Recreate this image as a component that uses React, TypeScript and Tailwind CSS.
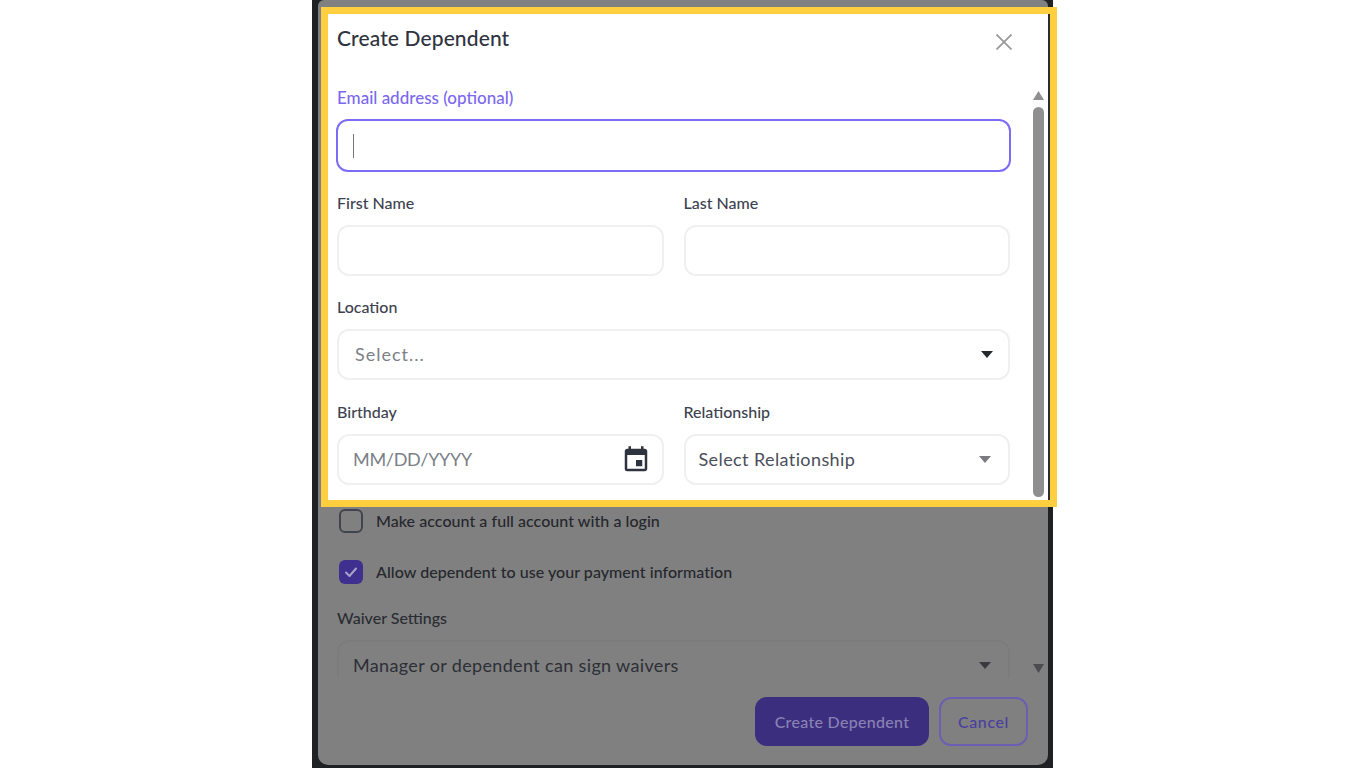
import React from 'react';
import { MdEvent } from 'react-icons/md';

const Caret: React.FC<{ className: string; up?: boolean }> = ({ className, up }) => (
    <svg viewBox="0 0 12 7" className={className} fill="currentColor" preserveAspectRatio="none">
        {up ? <path d="M6 0 12 7H0Z" /> : <path d="M0 0H12L6 7Z" />}
    </svg>
);

const Field: React.FC<{ label: string; children?: React.ReactNode; className?: string }> = ({ label, children, className }) => (
    <div className={className}>
        <div className="h-6 leading-6 text-[16px] font-medium text-[#3d4250]">{label}</div>
        <div className="mt-2.5 h-[51px] flex items-center rounded-xl border-2 border-[#f0f0f0] bg-white px-[14px]">
            {children}
        </div>
    </div>
);

const App: React.FC = () => {
    return (
        <div className="h-[768px] w-[1366px] overflow-hidden bg-white flex justify-center font-['Lato',sans-serif]">
            <div className="relative h-[768px] w-[741px] ml-[-1px] bg-[#202125] pl-[6px] pr-[5px] pb-[3px]">
                {/* dimmed modal underneath */}
                <div className="h-full rounded-b-[10px] rounded-t-md bg-[#808080] flex flex-col">
                    <div className="h-[678px] shrink-0 overflow-hidden pt-[509px] pl-[19px] pr-[38px] relative">
                        <div className="flex items-center h-6 pl-[2px]">
                            <div className="w-6 h-6 rounded-md border-2 border-[#3f4450]" />
                            <span className="ml-[13px] text-[16px] font-medium tracking-[0.05px] text-[#25272d]">Make account a full account with a login</span>
                        </div>
                        <div className="flex items-center h-6 pl-[2px] mt-[27px]">
                            <div className="w-6 h-6 rounded-md bg-[#3f2f8f] flex items-center justify-center">
                                <svg viewBox="0 0 16 16" className="w-4 h-4" fill="none" stroke="#a7a3c8" strokeWidth="2" strokeLinecap="round" strokeLinejoin="round">
                                    <path d="M3 8.5 6.5 12 13 4.5" />
                                </svg>
                            </div>
                            <span className="ml-[13px] text-[16px] font-medium tracking-[0.05px] text-[#25272d]">Allow dependent to use your payment information</span>
                        </div>
                        <div className="mt-[22px] h-6 leading-6 text-[16px] font-medium text-[#2a2c33]">Waiver Settings</div>
                        <div className="mt-[10px] h-[51px] flex items-center justify-between rounded-xl border-2 border-[#7a7d7b] px-[14px]">
                            <span className="text-[18px] tracking-[0.35px] text-[#2d2f36]">Manager or dependent can sign waivers</span>
                            <Caret className="w-3 h-[7px] mr-[3px] text-[#3a3a3e]" />
                        </div>
                        <Caret className="absolute right-[4px] top-[664px] w-[11px] h-[9px] text-[#4c4c4e]" />
                    </div>
                    <div className="flex justify-end gap-[10px] pt-[19px] pr-[20px]">
                        <button className="w-[174px] h-[49px] rounded-xl bg-[#3b2e7e] text-[16px] font-medium tracking-[0.3px] text-[#8a82b4]">Create Dependent</button>
                        <button className="w-[89px] h-[49px] rounded-xl border-2 border-[#6a5fb0] text-[16px] font-medium tracking-[0.6px] text-[#4b3f9e]">Cancel</button>
                    </div>
                </div>

                {/* highlighted part of the form */}
                <div className="absolute left-[9px] top-[7px] w-[736px] h-[500px] border-[7px] border-[#ffcf40] bg-white flex">
                    <div className="w-[703px] shrink-0 pl-[9px] pt-[11px]">
                        <div className="flex items-center justify-between h-7">
                            <h2 className="text-[21px] font-medium mt-[-2px] tracking-[0.12px] text-[#2f3340]">Create Dependent</h2>
                            <svg viewBox="0 0 16 16" className="w-4 h-4 mt-[5px] mr-[19px]" fill="none" stroke="#999999" strokeWidth="1.8">
                                <path d="M0.5 0.5 15.5 15.5M15.5 0.5 0.5 15.5" />
                            </svg>
                        </div>
                        <div className="mt-[33px] h-6 leading-6 text-[17px] font-medium text-[#7b68ee]">Email address (optional)</div>
                        <div className="mt-[9px] ml-[-1px] h-[53px] w-[675px] flex items-center rounded-xl border-2 border-[#7c6cf5] px-[15px]">
                            <div className="h-6 w-px bg-[#777777]" />
                        </div>
                        <div className="mt-[19px] grid grid-cols-2 gap-x-5 w-[673px]">
                            <Field label="First Name" />
                            <Field label="Last Name" />
                        </div>
                        <Field label="Location" className="mt-[19px] w-[673px]">
                            <div className="flex-1 flex items-center justify-between">
                                <span className="text-[18px] tracking-[1px] text-[#7b7f88] pl-[2px]">Select...</span>
                                <Caret className="w-3 h-[7px] mr-[1px] text-[#26282e]" />
                            </div>
                        </Field>
                        <div className="mt-5 grid grid-cols-2 gap-x-5 w-[673px]">
                            <Field label="Birthday">
                                <div className="flex-1 flex items-center justify-between">
                                    <span className="text-[18px] tracking-[-0.3px] text-[#7b7f88]">MM/DD/YYYY</span>
                                    <MdEvent className="w-[30px] h-[30px] mr-[-3px] text-[#2f3340]" />
                                </div>
                            </Field>
                            <Field label="Relationship">
                                <div className="flex-1 flex items-center justify-between">
                                    <span className="ml-[-1px] text-[18px] tracking-[0.4px] text-[#4a4e5a]">Select Relationship</span>
                                    <Caret className="w-3 h-[7px] mr-[3px] text-[#7c7c80]" />
                                </div>
                            </Field>
                        </div>
                    </div>
                    <div className="flex-1 flex justify-start pl-[2px]">
                        <div className="mt-[77px] flex flex-col items-center w-[11px] h-[406px] bg-[#fbfbfb]">
                            <Caret up className="w-[11px] h-[9px] text-[#8f8f8f]" />
                            <div className="mt-[7px] w-[11px] flex-1 rounded-full bg-[#8f8f8f]" />
                        </div>
                    </div>
                    <div className="w-[2px] shrink-0 bg-[#2b2c30]" />
                </div>
            </div>
        </div>
    );
};

export default App;
